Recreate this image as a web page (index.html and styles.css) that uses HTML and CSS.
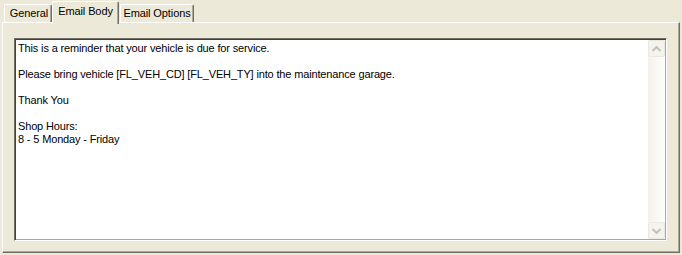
FILE: index.html
```html
<!DOCTYPE html>
<html>
<head>
<meta charset="utf-8">
<link rel="stylesheet" href="styles.css">
</head>
<body>
<div class="window">
  <div class="tabs">
    <div class="tab tab-general">General</div>
    <div class="tab tab-active">Email Body</div>
    <div class="tab tab-options">Email Options</div>
  </div>
  <div class="panel">
    <div class="edit">
      <div class="text">
        <div class="line">This is a reminder that your vehicle is due for service.</div>
        <div class="line">&nbsp;</div>
        <div class="line">Please bring vehicle [FL_VEH_CD] [FL_VEH_TY] into the maintenance garage.</div>
        <div class="line">&nbsp;</div>
        <div class="line">Thank You</div>
        <div class="line">&nbsp;</div>
        <div class="line">Shop Hours:</div>
        <div class="line">8 - 5 Monday - Friday</div>
      </div>
      <div class="scrollbar">
        <div class="sb-btn">
          <svg width="9" height="6" viewBox="0 0 9 6"><path d="M0.5 5 L4.5 1 L8.5 5" fill="none" stroke="#c3c1b4" stroke-width="2"/></svg>
        </div>
        <div class="sb-track"></div>
        <div class="sb-btn">
          <svg width="9" height="6" viewBox="0 0 9 6"><path d="M0.5 1 L4.5 5 L8.5 1" fill="none" stroke="#c3c1b4" stroke-width="2"/></svg>
        </div>
      </div>
    </div>
  </div>
</div>
</body>
</html>
```
FILE: styles.css
```css
html, body {
  margin: 0;
  padding: 0;
  background: #ece9d8;
}
.window {
  width: 682px;
  height: 255px;
  box-sizing: border-box;
  padding: 1px 2px 0 2px;
  font-family: Tahoma, "Liberation Sans", Arial, sans-serif;
  font-size: 11px;
  color: #000;
  display: flex;
  flex-direction: column;
}
.tabs {
  display: flex;
  align-items: flex-end;
  height: 21px;
  padding-left: 2px;
  position: relative;
  z-index: 1;
}
.tab {
  box-sizing: border-box;
  height: 18px;
  line-height: 16px;
  text-align: center;
  background: #ece9d8;
  border-top: 1px solid #fff;
  border-left: 1px solid #fff;
  border-right: 1px solid #716f64;
  box-shadow: inset -1px 0 0 #aca899;
  border-radius: 2px 2px 0 0;
  letter-spacing: -0.1px;
}
.tab-general {
  width: 48px;
  padding-left: 2px;
}
.tab-active {
  width: 67px;
  height: 23px;
  margin-bottom: -2px;
  line-height: 18px;
  padding-bottom: 3px;
}
.tab-options {
  width: 74px;
  margin-left: 1px;
}
.panel {
  box-sizing: border-box;
  height: 231px;
  border-top: 1px solid #fff;
  border-left: 1px solid #fff;
  border-right: 1px solid #716f64;
  border-bottom: 1px solid #716f64;
  box-shadow: inset -1px -1px 0 #aca899;
  padding: 15px 12px 0 11px;
}
.edit {
  box-sizing: border-box;
  height: 203px;
  background: #fff;
  border-top: 1px solid #716f64;
  border-left: 1px solid #716f64;
  border-right: 1px solid #fff;
  border-bottom: 1px solid #fff;
  box-shadow: inset 1px 1px 0 #404040, -1px -1px 0 #aca899 inset;
  display: flex;
  padding: 1px 1px 1px 2px;
}
.text {
  flex: 1;
  padding: 2px 0 0 1px;
  letter-spacing: -0.15px;
}
.line {
  height: 13px;
  line-height: 13px;
  white-space: nowrap;
}
.scrollbar {
  width: 17px;
  display: flex;
  flex-direction: column;
  background: linear-gradient(to right, #f3f1ec, #fefefb);
}
.sb-btn {
  box-sizing: border-box;
  width: 17px;
  height: 17px;
  border: 1px solid #e9e8e1;
  border-radius: 2px;
  background: #f4f3ee;
  display: flex;
  align-items: center;
  justify-content: center;
}
.sb-track {
  flex: 1;
}
```
